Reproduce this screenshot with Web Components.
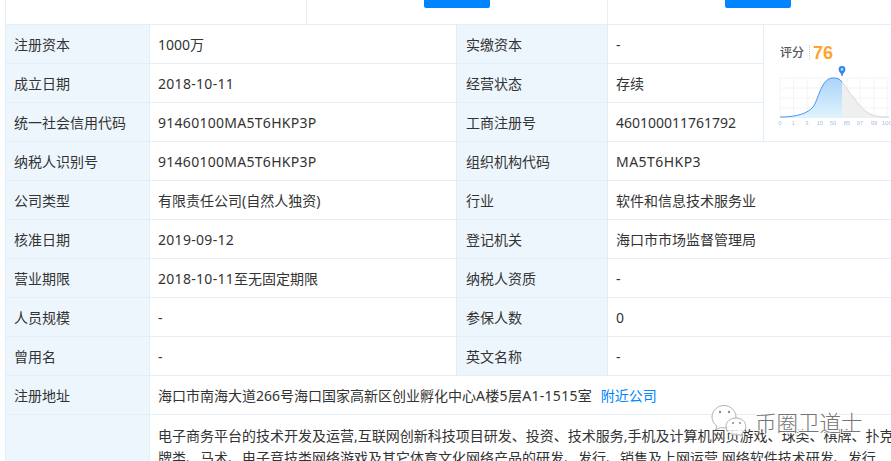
<!DOCTYPE html>
<html lang="zh"><head><meta charset="utf-8">
<style>
html,body{margin:0;padding:0;background:#fff}
body{width:891px;height:461px;overflow:hidden;position:relative;font:14px/20px "Noto Sans","Noto Sans CJK SC",sans-serif;color:#333}
</style></head><body>
<company-table>
  <top-row></top-row>
  <score-block>
    <info-row label="注册资本" value="1000万" label2="实缴资本" value2="-"></info-row>
    <info-row label="成立日期" value="<span style='letter-spacing:.3px'>2018-10-11</span>" label2="经营状态" value2="存续"></info-row>
    <info-row label="统一社会信用代码" value="<span style='letter-spacing:.28px'>91460100MA5T6HKP3P</span>" label2="工商注册号" value2="460100011761792"></info-row>
    <score-card slot="side"></score-card>
  </score-block>
  <info-row label="纳税人识别号" value="<span style='letter-spacing:.28px'>91460100MA5T6HKP3P</span>" label2="组织机构代码" value2="<span style='letter-spacing:.45px'>MA5T6HKP3</span>"></info-row>
  <info-row label="公司类型" value="有限责任公司(自然人独资)" label2="行业" value2="软件和信息技术服务业"></info-row>
  <info-row label="核准日期" value="<span style='letter-spacing:.3px'>2019-09-12</span>" label2="登记机关" value2="海口市市场监督管理局"></info-row>
  <info-row label="营业期限" value="<span style='letter-spacing:.3px'>2018-10-11</span>至无固定期限" label2="纳税人资质" value2="-"></info-row>
  <info-row label="人员规模" value="-" label2="参保人数" value2="0"></info-row>
  <info-row label="曾用名" value="-" label2="英文名称" value2="-"></info-row>
  <wide-row label="注册地址">海口市南海大道266号海口国家高新区创业孵化中心<span style="letter-spacing:.3px">A楼5层A1-1515</span>室<a>附近公司</a></wide-row>
  <scope-row>电子商务平台的技术开发及运营,互联网创新科技项目研发、投资、技术服务,手机及计算机网页游戏、球类、棋牌、扑克<br>牌类、马术、电子竞技类网络游戏及其它体育文化网络产品的研发、发行、销售及上网运营,网络软件技术研发、发行</scope-row>
</company-table>
<wx-mark></wx-mark>
<script>
const B='#e4eef6', L='#eef6fd';
function def(name, html){
  customElements.define(name, class extends HTMLElement{
    connectedCallback(){
      if(this.shadowRoot) return;
      const r=this.attachShadow({mode:'open'});
      r.innerHTML=typeof html==='function'?html(this):html;
    }
  });
}
def('company-table',`<style>:host{display:block;margin-left:5px;width:900px;border-left:1px solid ${B}}</style><slot></slot>`);
def('top-row',`<style>
:host{display:grid;grid-template-columns:300px 1px 300px 1px 1fr;height:24px;border-bottom:1px solid ${B}}
.s{background:${B}} .c{display:flex;justify-content:center}
.b{width:66px;height:8px;background:#0084ff;border-radius:0 0 2px 2px}
</style><div></div><div class="s"></div><div class="c"><div class="b"></div></div><div class="s"></div><div class="c" style="justify-content:flex-start;padding-left:117px"><div class="b"></div></div>`);
const rowCss=`:host{display:grid;height:38px;border-bottom:1px solid ${B};align-items:stretch}
.l,.v{display:flex;align-items:center;white-space:nowrap;box-sizing:border-box;padding-left:8px;padding-top:1px}
.l{background:${L};border-right:1px solid ${B}}
.v{border-right:1px solid ${B}}
.v:last-child{border-right:0}`;
def('info-row',h=>`<style>${rowCss}
:host{grid-template-columns:144px 307px 151px 1fr}
.c3{padding-left:9px}
</style><div class="l">${h.getAttribute('label')}</div><div class="v"><div>${h.getAttribute('value')}</div></div><div class="l c3">${h.getAttribute('label2')}</div><div class="v"><div>${h.getAttribute('value2')}</div></div>`);
def('score-block',`<style>
:host{display:grid;grid-template-columns:758px 1fr}
.m{border-right:1px solid ${B}}
</style><div class="m"><slot></slot></div><slot name="side"></slot>`);
def('wide-row',`<style>${rowCss}
:host{grid-template-columns:144px 1fr}
.v{display:block;line-height:37px;padding-top:1px}
::slotted(a){color:#0084ff;margin-left:9px}
</style><div class="l">注册地址</div><div class="v"><slot></slot></div>`);
def('scope-row',`<style>
:host{display:grid;grid-template-columns:144px 745px;height:60px}
.l{background:${L};border-right:1px solid ${B};box-sizing:border-box}
.v{padding:10px 0 0 8px;line-height:22px;height:60px;overflow:hidden;box-sizing:border-box;white-space:nowrap}
</style><div class="l"></div><div class="v"><slot></slot></div>`);
def('score-card',`<style>
:host{display:block;box-sizing:border-box;padding:15px 0 0 16px;border-bottom:1px solid ${B};height:117px}
.h{display:flex;align-items:center;height:24px}
.t{font-size:12px;color:#555;font-weight:500;padding-right:5px;border-right:1px dotted #ccc;line-height:15px}
.n{font-size:18px;font-weight:700;color:#ffa32e;margin:2px 0 0 3px;line-height:24px;font-family:"Liberation Sans",sans-serif}
svg{display:block;margin:1px 0 0 -2px;filter:blur(.25px)}
text{font:6px "Liberation Sans",sans-serif;fill:#a9c1e2}
</style><div class="h"><span class="t">评分</span><span class="n">76</span></div>
<svg width="113" height="65" viewBox="0 0 113 65">
<defs><linearGradient id="g" x1="0" y1="0" x2="0" y2="1"><stop offset="0" stop-color="#abd3fa"/><stop offset="1" stop-color="#e0f4fc"/></linearGradient></defs>
<g stroke="#f4f4f6" stroke-width="1" fill="none">
<path d="M2 13H112M2 23H112M2 33H112M2 43H112M2 13V52M15.500 13V52M29 13V52M42 13V52M55 13V52M69 13V52M82 13V52M96 13V52M109 13V52"/></g>
<path d="M2 52C20 52 30 48 35 42C40 36 43 14 54 13C59 12.500 62 14 64 17V53H2Z" fill="url(#g)"/>
<path d="M64 17C68 21 71 28 75 32C80 38 84 44 89 47C94 51 100 52 111 52V53H64Z" fill="#efefef"/>
<path d="M64 17C68 21 71 28 75 32C80 38 84 44 89 47C94 51 100 52 111 52" fill="none" stroke="#d6d6d6"/>
<path d="M2 52C20 52 30 48 35 42C40 36 43 14 54 13C59 12.500 62 14 64 17" fill="none" stroke="#4a96f2" stroke-width="1"/>
<path d="M64 1a3.400 3.400 0 0 1 3.400 3.400c0 2-2 3.400-2.700 5V11h-1.400V9.400c-.7-1.600-2.700-3-2.700-5A3.400 3.400 0 0 1 64 1Z" fill="#2f86ee"/><circle cx="64" cy="4.400" r="1.300" fill="#bcd9fb"/>
<g text-anchor="middle"><text x="2" y="60">0</text><text x="15.500" y="60">1</text><text x="29" y="60">3</text><text x="42" y="60">15</text><text x="55" y="60">50</text><text x="69" y="60">85</text><text x="82" y="60">97</text><text x="96" y="60">99</text><text x="109" y="60">100</text></g>
</svg>`);
def('wx-mark',`<style>
:host{position:absolute;left:711px;top:403px;width:180px;height:36px;display:flex;align-items:center}
svg{display:block;flex:none}
span{font:21.500px/1 "Noto Sans CJK SC",sans-serif;font-weight:300;margin:2px 0 0 8px;color:#747474;text-shadow:-1px -1px 0 #fff,1px -1px 0 #fff,-1px 1px 0 #fff,1px 1px 0 #fff,0 0 3px #fff}
</style><svg width="36" height="34" viewBox="0 0 36 34" fill="#fff" fill-opacity=".85" stroke="#a8a8a8" stroke-width=".9">
<path d="M13 1.500C6.500 1.500 1 6.500 1 13c0 4 2 7 5 9l-1.500 4 5-2.500c1.200.3 2.300.5 3.500.5 6.500 0 12-5 12-11S19.500 1.500 13 1.500Z"/>
<path d="M25 14c-5.500 0-10 3.500-10 8.500S19.500 31 25 31c1.200 0 2 0 3-.4l3.500 2-.9-3.200c2.600-1.600 4.200-4 4.200-6.900C34.800 17.500 30.500 14 25 14Z"/>
<g fill="#777" stroke="none"><circle cx="9" cy="8" r="1.200"/><circle cx="18" cy="8" r="1.200"/><circle cx="22" cy="19" r="1"/><circle cx="29" cy="19" r="1"/></g></svg><span>币圈卫道士</span>`);
</script></body></html>
